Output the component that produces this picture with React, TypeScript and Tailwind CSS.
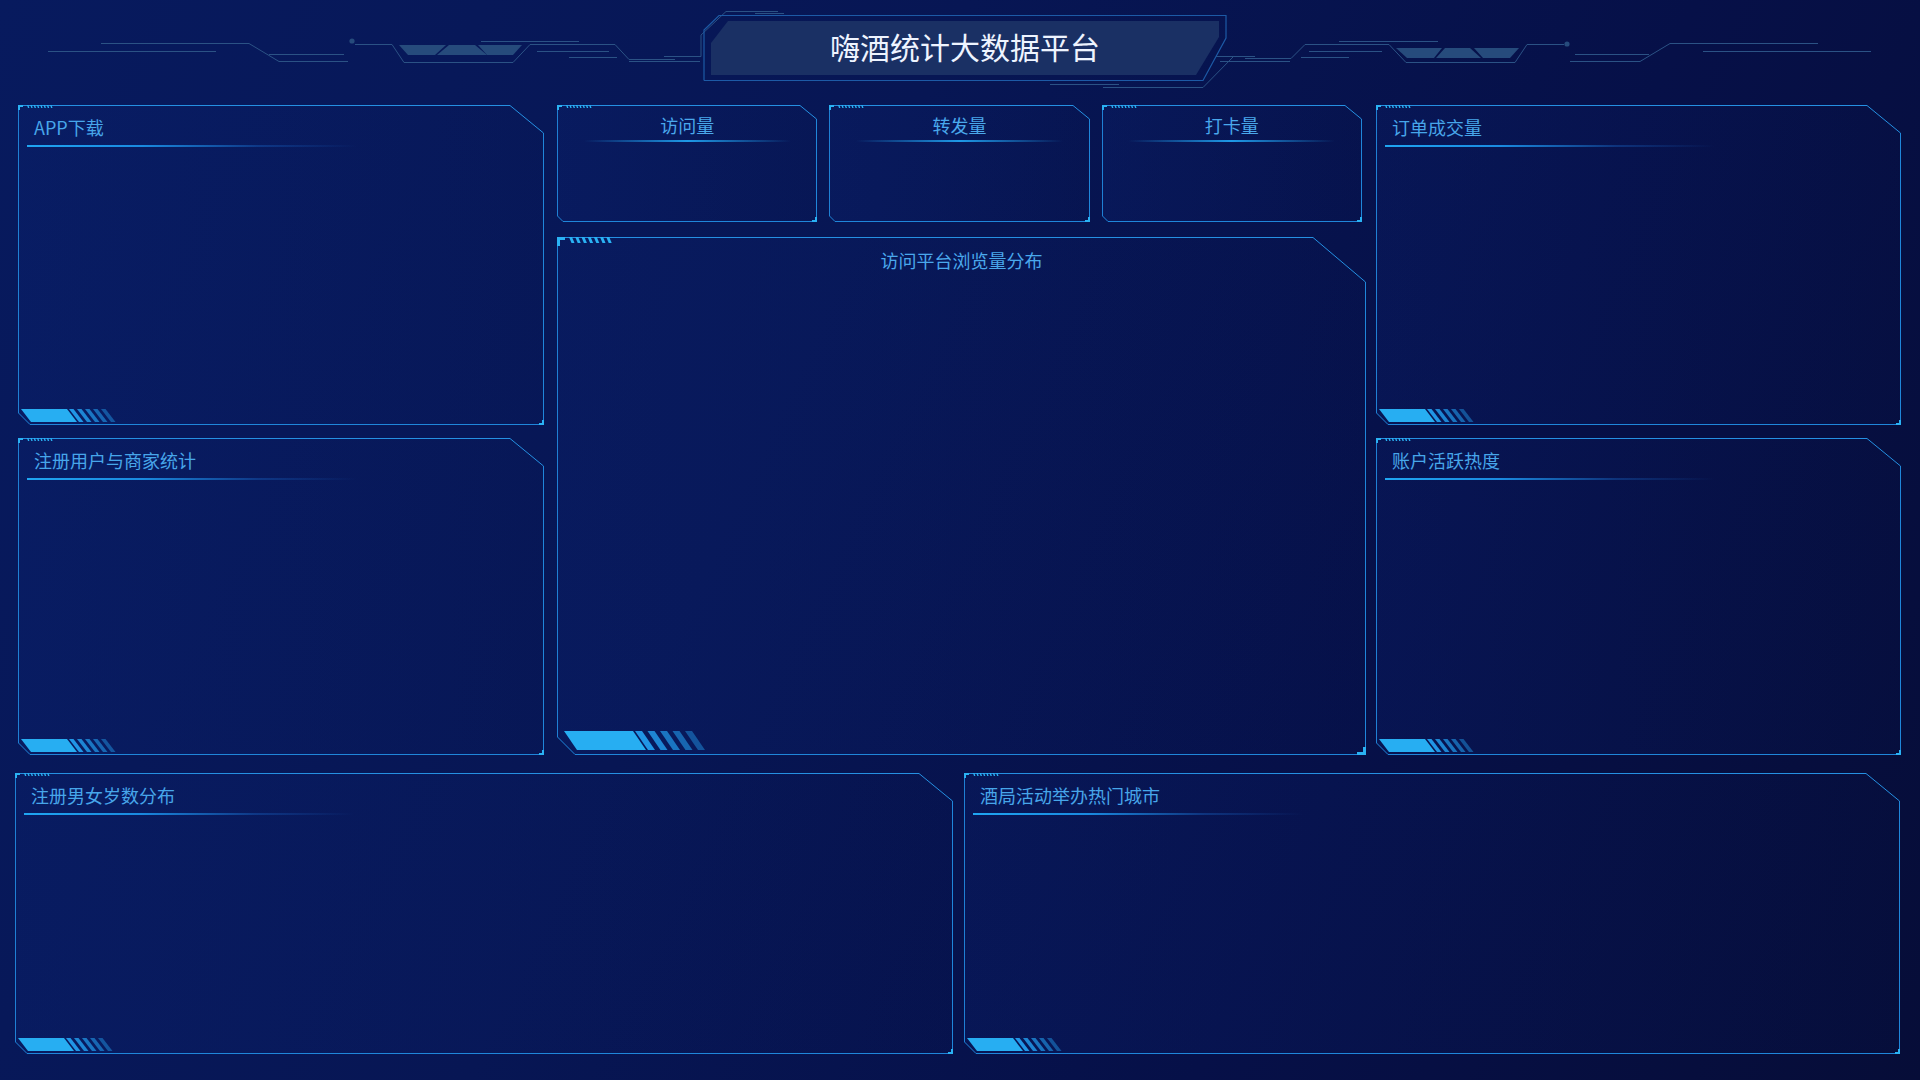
import React from 'react';

type Variant = 'side' | 'small' | 'big';

const CFG: Record<Variant, {
  clip: string; top: string; rightLine: string; tr: string; trW: number; trH: number;
  leftLine: string; bottomLine: string; bl: string; blS: number;
}> = {
  side: {
    clip: '[clip-path:polygon(0_0,calc(100%_-_34px)_0,100%_28px,100%_100%,12px_100%,0_calc(100%_-_12px))]',
    top: 'right-[34px]', rightLine: 'top-[28px]', tr: 'w-[34px] h-[28px]', trW: 34, trH: 28,
    leftLine: 'bottom-[12px]', bottomLine: 'left-[12px]', bl: 'w-[12px] h-[12px]', blS: 12,
  },
  small: {
    clip: '[clip-path:polygon(0_0,calc(100%_-_17px)_0,100%_14px,100%_100%,6px_100%,0_calc(100%_-_6px))]',
    top: 'right-[17px]', rightLine: 'top-[14px]', tr: 'w-[17px] h-[14px]', trW: 17, trH: 14,
    leftLine: 'bottom-[6px]', bottomLine: 'left-[6px]', bl: 'w-[6px] h-[6px]', blS: 6,
  },
  big: {
    clip: '[clip-path:polygon(0_0,calc(100%_-_53px)_0,100%_45px,100%_100%,18px_100%,0_calc(100%_-_18px))]',
    top: 'right-[53px]', rightLine: 'top-[45px]', tr: 'w-[53px] h-[45px]', trW: 53, trH: 45,
    leftLine: 'bottom-[18px]', bottomLine: 'left-[18px]', bl: 'w-[18px] h-[18px]', blS: 18,
  },
};

const BORDER = '#1f86da';
const BRIGHT = '#2ab2f4';

function SmallBar() {
  const stripes = [0, 1, 2, 3, 4];
  return (
    <svg className="absolute left-[3px] bottom-[3px]" width="96" height="13" viewBox="0 0 96 13">
      <polygon points="0,0 46,0 56,13 10,13" fill="#27aef2" />
      {stripes.map((i) => {
        const x = 48 + i * 8;
        return (
          <polygon
            key={i}
            points={`${x},0 ${x + 4.5},0 ${x + 14.5},13 ${x + 10},13`}
            fill="#2196e6"
            opacity={1 - i * 0.13}
          />
        );
      })}
    </svg>
  );
}

function BigBar() {
  const stripes = [0, 1, 2, 3, 4];
  return (
    <svg className="absolute left-[7px] bottom-[5px]" width="142" height="19" viewBox="0 0 142 19">
      <polygon points="0,0 69,0 82,19 13,19" fill="#27aef2" />
      {stripes.map((i) => {
        const x = 71 + i * 12.5;
        return (
          <polygon
            key={i}
            points={`${x},0 ${x + 7},0 ${x + 20},19 ${x + 13},19`}
            fill="#2196e6"
            opacity={1 - i * 0.13}
          />
        );
      })}
    </svg>
  );
}

function Panel({
  variant,
  title,
  className = '',
}: {
  variant: Variant;
  title: string;
  className?: string;
}) {
  const c = CFG[variant];
  const big = variant === 'big';
  return (
    <div className={`relative ${className}`}>
      <div
        className={`absolute inset-0 ${c.clip} bg-[linear-gradient(90deg,rgba(14,42,130,0.18),rgba(10,30,100,0.05))]`}
      />
      <div className={`absolute top-0 left-0 h-px ${c.top} bg-[#2590e2]`} />
      <div className={`absolute right-0 bottom-0 w-px ${c.rightLine} bg-[#1f86da]`} />
      <div className={`absolute left-0 top-0 w-px ${c.leftLine} bg-[#1f80d4]`} />
      <div className={`absolute right-0 bottom-0 h-px ${c.bottomLine} bg-[#1f86da]`} />
      <svg
        className={`absolute top-0 right-0 ${c.tr} overflow-visible`}
        viewBox={`0 0 ${c.trW} ${c.trH}`}
      >
        <line x1="0" y1="0.5" x2={c.trW - 0.5} y2={c.trH} stroke="#2590e2" strokeWidth="1" />
      </svg>
      <svg
        className={`absolute bottom-0 left-0 ${c.bl} overflow-visible`}
        viewBox={`0 0 ${c.blS} ${c.blS}`}
      >
        <line x1="0.5" y1="0" x2={c.blS} y2={c.blS - 0.5} stroke={BORDER} strokeWidth="1" />
      </svg>

      {big ? (
        <>
          <div className="absolute top-0 left-0 w-[8px] h-[3px] bg-[#2ab2f4]" />
          <div className="absolute top-0 left-0 w-[3px] h-[9px] bg-[#2ab2f4]" />
          <svg className="absolute top-0 left-[12px]" width="46" height="6" viewBox="0 0 46 6">
            {[0, 1, 2, 3, 4, 5, 6].map((i) => {
              const x = i * 6.2;
              return <polygon key={i} points={`${x},0 ${x + 3},0 ${x + 5.5},6 ${x + 2.5},6`} fill={BRIGHT} />;
            })}
          </svg>
        </>
      ) : (
        <>
          <div className="absolute top-0 left-0 w-[5px] h-[2px] bg-[#2ab2f4]" />
          <div className="absolute top-0 left-0 w-[2px] h-[5px] bg-[#2ab2f4]" />
          <svg className="absolute top-0 left-[9px]" width="28" height="3" viewBox="0 0 28 3">
            {[0, 1, 2, 3, 4, 5, 6, 7].map((i) => {
              const x = i * 3.3;
              return <polygon key={i} points={`${x},0 ${x + 1.4},0 ${x + 2.4},3 ${x + 1},3`} fill={BRIGHT} />;
            })}
          </svg>
        </>
      )}

      {big ? (
        <>
          <div className="absolute bottom-0 right-0 w-[9px] h-[3px] bg-[#2ab2f4]" />
          <div className="absolute bottom-0 right-0 w-[3px] h-[8px] bg-[#2ab2f4]" />
        </>
      ) : (
        <>
          <div className="absolute bottom-0 right-0 w-[5px] h-[2px] bg-[#2ab2f4]" />
          <div className="absolute bottom-0 right-0 w-[2px] h-[5px] bg-[#2ab2f4]" />
        </>
      )}

      {variant === 'side' && <SmallBar />}
      {big && <BigBar />}

      {variant === 'side' && (
        <div className="relative pt-[10px] pl-[9px]">
          <div className="pl-[7px] text-[18px] leading-[24px] text-[#47a6ea]">{title}</div>
          <div className="mt-[6px] h-[2px] w-[330px] bg-[linear-gradient(90deg,#1fa6f2_0%,#1a8ae0_35%,rgba(26,110,210,0.35)_70%,rgba(26,110,210,0)_100%)]" />
        </div>
      )}
      {variant === 'small' && (
        <div className="relative pt-[8px] flex flex-col items-center">
          <div className="text-[18px] leading-[24px] text-[#4aa8ec]">{title}</div>
          <div className="mt-[3px] h-[2px] w-[207px] bg-[linear-gradient(90deg,rgba(30,150,235,0)_0%,#1e9ae8_50%,rgba(30,150,235,0)_100%)]" />
        </div>
      )}
      {big && (
        <div className="relative pt-[11px] flex justify-center">
          <div className="text-[18px] leading-[24px] text-[#4aa8ec]">{title}</div>
        </div>
      )}
    </div>
  );
}

function Header() {
  const ln = '#2b5285';
  return (
    <div className="relative h-[105px]">
      <svg className="absolute inset-0" width="1920" height="105" viewBox="0 0 1920 105">
        <g stroke={ln} strokeWidth="1" fill="none">
          <path d="M101 43.5H249L279 61.5H348" />
          <path d="M48 51.5H216" />
          <path d="M269 54.5H344" />
          <path d="M355 44.5H392L404 62.5H513L530 44.5H615L629 59.5H675" />
          <path d="M481 41.5H579" />
          <path d="M537 51.5H609" />
          <path d="M569 57.5H617" />
          <path d="M629 61.5H700" />
          <path d="M664 56.5H701V35L726 11.5H778" />
          <path d="M755 13.5H784" />
          <path d="M1216 56.5H1255" />
          <path d="M1245 58.5H1291L1305 44.5H1389L1406 62.5H1515L1527 44.5H1564" />
          <path d="M1220 61.5H1290" />
          <path d="M1339 41.5H1438" />
          <path d="M1309 51.5H1382" />
          <path d="M1301 57.5H1349" />
          <path d="M1575 54.5H1649" />
          <path d="M1570 61.5H1640L1670 43.5H1818" />
          <path d="M1703 51.5H1871" />
          <path d="M1050 84.5H1119" />
          <path d="M1103 87.5H1203L1233 57" />
        </g>
        <g fill="#264b7c">
          <circle cx="352" cy="41" r="2.6" />
          <circle cx="1567" cy="44" r="2.6" />
          <polygon points="399,45 446,45 435,55 408,55" />
          <polygon points="449,45 475,45 487,55 437,55" />
          <polygon points="478,45 522,45 513,55 487,55" />
          <polygon points="1396,48 1442,48 1434,58 1407,58" />
          <polygon points="1445,48 1470,48 1481,58 1436,58" />
          <polygon points="1474,48 1519,48 1510,58 1483,58" />
        </g>
        <polygon points="711,43 728,21 1219,21 1219,37 1196,75 711,75" fill="#1a3064" />
        <polyline
          points="704,80.5 704,30 719,15.5 1226,15.5 1226,38 1203,80.5 704,80.5"
          fill="none"
          stroke="#1d5aa6"
          strokeWidth="1.2"
        />
      </svg>
      <div className="absolute left-[711px] top-[19px] w-[508px] h-[54px] flex items-center justify-center text-[30px] leading-none text-[#eef4ff]">
        嗨酒统计大数据平台
      </div>
    </div>
  );
}

export default function App() {
  return (
    <div className="w-[1920px] h-[1080px] overflow-hidden relative font-['Noto_Sans_CJK_SC',sans-serif] bg-[linear-gradient(115deg,#071a5e_0%,#071654_40%,#061048_70%,#060d38_100%)]">
      <Header />
      <div className="flex h-[650px] pl-[18px] pr-[19px]">
        <div className="flex flex-col w-[526px] gap-[13px]">
          <Panel variant="side" title="APP下载" className="h-[320px]" />
          <Panel variant="side" title="注册用户与商家统计" className="flex-1" />
        </div>
        <div className="flex flex-col w-[809px] ml-[13px]">
          <div className="flex gap-[12px] h-[117px] pr-[4px]">
            <Panel variant="small" title="访问量" className="flex-1" />
            <Panel variant="small" title="转发量" className="flex-1" />
            <Panel variant="small" title="打卡量" className="flex-1" />
          </div>
          <Panel variant="big" title="访问平台浏览量分布" className="mt-[15px] flex-1" />
        </div>
        <div className="flex flex-col w-[525px] ml-[10px] gap-[13px]">
          <Panel variant="side" title="订单成交量" className="h-[320px]" />
          <Panel variant="side" title="账户活跃热度" className="flex-1" />
        </div>
      </div>
      <div className="flex h-[281px] mt-[18px] pl-[15px] pr-[20px] gap-[11px]">
        <Panel variant="side" title="注册男女岁数分布" className="w-[938px]" />
        <Panel variant="side" title="酒局活动举办热门城市" className="w-[936px]" />
      </div>
    </div>
  );
}
